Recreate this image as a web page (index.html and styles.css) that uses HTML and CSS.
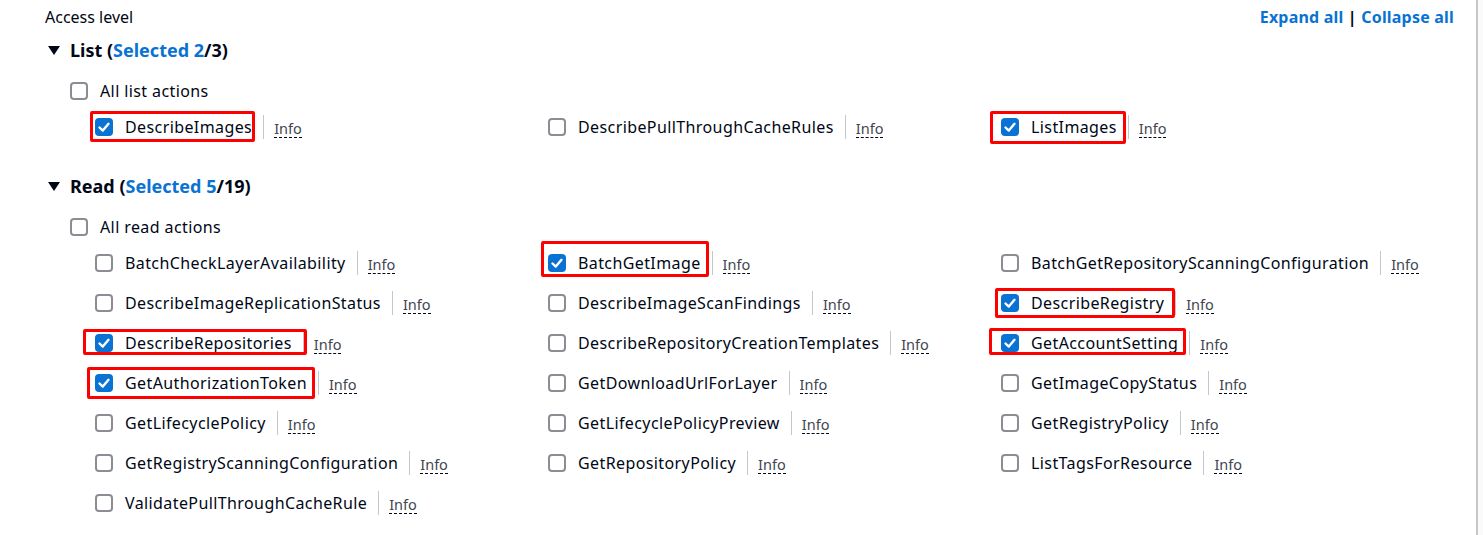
FILE: index.html
```html
<!DOCTYPE html>
<html>
<head>
<meta charset="utf-8">
<link rel="stylesheet" href="styles.css">
</head>
<body>
<div class="page">
  <div class="topbar">
    <span class="access">Access level</span>
    <span class="toplinks"><a class="link">Expand all</a> <span class="sep">|</span> <a class="link">Collapse all</a></span>
  </div>

  <section class="group">
    <h3 class="heading"><svg class="caret" width="12" height="9" viewBox="0 0 12 9"><path d="M0 0 H12 L6 9 Z" fill="#000716"/></svg>List (<span class="sel">Selected 2</span>/3)</h3>
    <label class="allrow"><span class="cb"></span><span class="lbl">All list actions</span></label>
    <div class="grid">
      <div class="item"><span class="act"><span class="cb on"></span><span class="lbl">DescribeImages</span><span class="mark" style="left:-5px;right:-3px;top:-4px;bottom:-3px"></span></span><span class="div"></span><span class="info">Info</span></div>
      <div class="item"><span class="act"><span class="cb"></span><span class="lbl">DescribePullThroughCacheRules</span></span><span class="div"></span><span class="info">Info</span></div>
      <div class="item"><span class="act"><span class="cb on"></span><span class="lbl">ListImages</span><span class="mark" style="left:-11px;right:-9px;top:-4px;bottom:-5px"></span></span><span class="div"></span><span class="info">Info</span></div>
    </div>
  </section>

  <section class="group read">
    <h3 class="heading"><svg class="caret" width="12" height="9" viewBox="0 0 12 9"><path d="M0 0 H12 L6 9 Z" fill="#000716"/></svg>Read (<span class="sel">Selected 5</span>/19)</h3>
    <label class="allrow"><span class="cb"></span><span class="lbl">All read actions</span></label>
    <div class="grid">
      <div class="item"><span class="act"><span class="cb"></span><span class="lbl">BatchCheckLayerAvailability</span></span><span class="div"></span><span class="info">Info</span></div>
      <div class="item"><span class="act"><span class="cb on"></span><span class="lbl">BatchGetImage</span><span class="mark" style="left:-7px;right:-8px;top:-10px;bottom:-2px"></span></span><span class="div"></span><span class="info">Info</span></div>
      <div class="item"><span class="act"><span class="cb"></span><span class="lbl">BatchGetRepositoryScanningConfiguration</span></span><span class="div"></span><span class="info">Info</span></div>

      <div class="item"><span class="act"><span class="cb"></span><span class="lbl">DescribeImageReplicationStatus</span></span><span class="div"></span><span class="info">Info</span></div>
      <div class="item"><span class="act"><span class="cb"></span><span class="lbl">DescribeImageScanFindings</span></span><span class="div"></span><span class="info">Info</span></div>
      <div class="item"><span class="act"><span class="cb on"></span><span class="lbl">DescribeRegistry</span><span class="mark" style="left:-6px;right:-11px;top:-3px;bottom:-3px"></span></span><span class="div"></span><span class="info">Info</span></div>

      <div class="item"><span class="act"><span class="cb on"></span><span class="lbl">DescribeRepositories</span><span class="mark" style="left:-12px;right:-15px;top:-2px;bottom:0"></span></span><span class="div"></span><span class="info">Info</span></div>
      <div class="item"><span class="act"><span class="cb"></span><span class="lbl">DescribeRepositoryCreationTemplates</span></span><span class="div"></span><span class="info">Info</span></div>
      <div class="item"><span class="act"><span class="cb on"></span><span class="lbl">GetAccountSetting</span><span class="mark" style="left:-12px;right:-8px;top:-3px;bottom:0"></span></span><span class="div"></span><span class="info">Info</span></div>

      <div class="item"><span class="act"><span class="cb on"></span><span class="lbl">GetAuthorizationToken</span><span class="mark" style="left:-8px;right:-8px;top:-4px;bottom:-4px"></span></span><span class="div"></span><span class="info">Info</span></div>
      <div class="item"><span class="act"><span class="cb"></span><span class="lbl">GetDownloadUrlForLayer</span></span><span class="div"></span><span class="info">Info</span></div>
      <div class="item"><span class="act"><span class="cb"></span><span class="lbl">GetImageCopyStatus</span></span><span class="div"></span><span class="info">Info</span></div>

      <div class="item"><span class="act"><span class="cb"></span><span class="lbl">GetLifecyclePolicy</span></span><span class="div"></span><span class="info">Info</span></div>
      <div class="item"><span class="act"><span class="cb"></span><span class="lbl">GetLifecyclePolicyPreview</span></span><span class="div"></span><span class="info">Info</span></div>
      <div class="item"><span class="act"><span class="cb"></span><span class="lbl">GetRegistryPolicy</span></span><span class="div"></span><span class="info">Info</span></div>

      <div class="item"><span class="act"><span class="cb"></span><span class="lbl">GetRegistryScanningConfiguration</span></span><span class="div"></span><span class="info">Info</span></div>
      <div class="item"><span class="act"><span class="cb"></span><span class="lbl">GetRepositoryPolicy</span></span><span class="div"></span><span class="info">Info</span></div>
      <div class="item"><span class="act"><span class="cb"></span><span class="lbl">ListTagsForResource</span></span><span class="div"></span><span class="info">Info</span></div>

      <div class="item"><span class="act"><span class="cb"></span><span class="lbl">ValidatePullThroughCacheRule</span></span><span class="div"></span><span class="info">Info</span></div>
    </div>
  </section>
</div>
</body>
</html>
```

FILE: styles.css
```css
html, body {
  margin: 0;
  padding: 0;
  background: #fafafa;
}
body {
  font-family: "Noto Sans", "Open Sans", sans-serif;
  font-size: 16px;
  color: #000716;
}
.page {
  width: 1478px;
  height: 535px;
  box-sizing: border-box;
  background: #ffffff;
  border-right: 2px solid #c6c6cd;
  padding: 7px 22px 0 45px;
}
.topbar {
  display: flex;
  justify-content: space-between;
  align-items: center;
  height: 20px;
  line-height: 20px;
}
.toplinks {
  font-weight: 700;
  letter-spacing: 0.2px;
}
.link {
  color: #0972d3;
}
.sep {
  color: #000716;
}
.group {
  margin-top: 12px;
}
.group.read {
  margin-top: 36px;
}
.heading {
  margin: 0;
  display: flex;
  align-items: center;
  height: 22px;
  font-size: 18px;
  font-weight: 700;
  line-height: 22px;
}
.caret {
  margin: 0 10px 0 3px;
}
.sel {
  color: #0972d3;
}
.allrow {
  display: flex;
  align-items: center;
  height: 24px;
  margin: 18px 0 12px 25px;
}
.grid {
  display: grid;
  grid-template-columns: repeat(3, 453px);
  row-gap: 16px;
  padding-left: 50px;
}
.item {
  display: flex;
  align-items: center;
  height: 24px;
}
.act {
  position: relative;
  display: flex;
  align-items: center;
  height: 24px;
}
.cb {
  width: 18px;
  height: 18px;
  box-sizing: border-box;
  border: 2px solid #8c8c94;
  border-radius: 4px;
  margin-right: 12px;
  flex: none;
}
.cb.on {
  border: none;
  background: #0972d3 url("data:image/svg+xml,%3Csvg xmlns='http://www.w3.org/2000/svg' width='18' height='18' viewBox='0 0 18 18'%3E%3Cpath d='M4.5 9.5 L7.8 12.6 L13.5 5.8' fill='none' stroke='white' stroke-width='2.4' stroke-linecap='round' stroke-linejoin='round'/%3E%3C/svg%3E") no-repeat center;
}
.lbl {
  line-height: 20px;
  white-space: nowrap;
  letter-spacing: 0.4px;
}
.div {
  width: 1px;
  height: 24px;
  background: #c6c6cd;
  margin: 0 10px 0 11px;
}
.info {
  font-size: 14.5px;
  color: #424650;
  line-height: 18px;
  margin-top: 2px;
  border-bottom: 1px dashed #000716;
}
.mark {
  position: absolute;
  border: 3px solid #ff0000;
  border-radius: 2px;
  pointer-events: none;
}
```
